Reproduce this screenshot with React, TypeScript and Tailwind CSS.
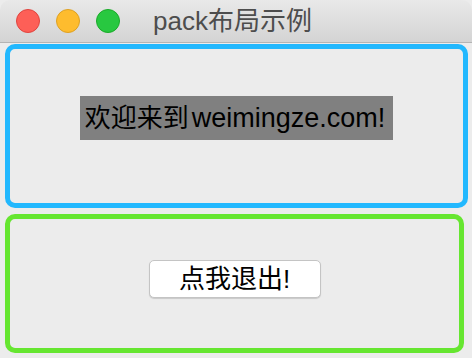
export default function App() {
  return (
    <div
      className="w-[472px] h-[358px] bg-[#ececec] flex flex-col overflow-hidden"
      style={{ fontFamily: '"Liberation Sans", "Noto Sans CJK SC", sans-serif' }}
    >
      {/* Title bar */}
      <div className="h-[43px] shrink-0 relative flex items-center bg-gradient-to-b from-[#e9e9e9] to-[#d4d4d4] border-b border-[#b4b4b4] rounded-t-[10px]">
        <div className="flex items-center gap-[16px] pl-[16px]">
          <span className="w-[24px] h-[24px] rounded-full bg-[#fd5f57] border border-[#e0443e]" />
          <span className="w-[24px] h-[24px] rounded-full bg-[#febc2e] border border-[#dea123]" />
          <span className="w-[24px] h-[24px] rounded-full bg-[#28c840] border border-[#1aab29]" />
        </div>
        <span className="ml-[33px] text-[26px] text-[#4d4d4d] leading-none">pack布局示例</span>
      </div>

      {/* Body */}
      <div className="flex-1 flex flex-col pt-[1px] pb-[5px] pl-[5px] gap-[6px]">
        <div className="h-[164px] mr-[4px] border-[5px] border-[#22b8fe] rounded-[10px] flex items-center justify-center pb-[16px]">
          <div className="h-[44px] pl-[5px] pr-[8px] bg-[#808080] flex items-center text-[26px] text-black whitespace-nowrap">
            <span>欢迎来到</span>
            <span className="ml-[3px] text-[27px]">weimingze.com!</span>
          </div>
        </div>
        <div className="h-[139px] mr-[8px] border-[5px] border-[#66e630] rounded-[10px] flex items-center justify-center pb-[9px]">
          <button className="w-[172px] h-[38px] bg-white rounded-[5px] border border-[#c4c4c4] shadow-[0_1px_1px_rgba(0,0,0,0.15)] text-[26px] text-black flex items-center justify-center">
            点我退出!
          </button>
        </div>
      </div>
    </div>
  );
}
